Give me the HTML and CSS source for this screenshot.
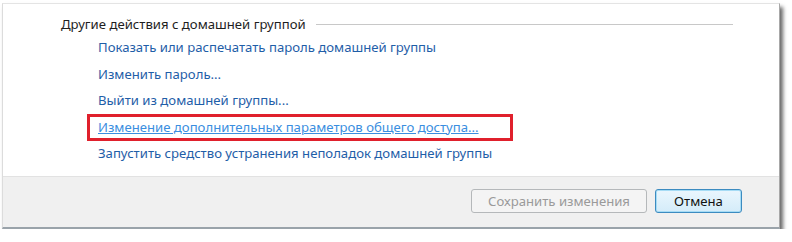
FILE: index.html
```html
<!DOCTYPE html>
<html lang="ru">
<head>
<meta charset="utf-8">
<link rel="stylesheet" href="styles.css">
</head>
<body>
<div class="window">
  <div class="content">
    <div class="heading">
      <span class="heading-text">Другие действия с домашней группой</span>
      <span class="heading-line"></span>
    </div>
    <ul class="links">
      <li><a class="link">Показать или распечатать пароль домашней группы</a></li>
      <li><a class="link">Изменить пароль...</a></li>
      <li><a class="link">Выйти из домашней группы...</a></li>
      <li class="highlight"><a class="link link-hover">Изменение дополнительных параметров общего доступа...</a></li>
      <li><a class="link">Запустить средство устранения неполадок домашней группы</a></li>
    </ul>
  </div>
  <div class="footer">
    <button class="btn btn-disabled">Сохранить изменения</button>
    <button class="btn btn-default">Отмена</button>
  </div>
</div>
</body>
</html>
```
FILE: styles.css
```css
html, body {
  margin: 0;
  padding: 0;
  background: #ffffff;
}
body {
  font-family: "Noto Sans", "Open Sans", sans-serif;
  font-size: 13.15px;
}
.window {
  margin: 3px 0 0 2px;
  width: 776px;
  height: 223px;
  border-left: 1px solid #dcdcdc;
  border-top: 1px solid #e4e4e4;
  border-right: 1px solid #a8a8a8;
  border-bottom: 2px solid #9aa3aa;
  box-shadow: 3px 4px 4px rgba(0, 0, 0, 0.6);
  display: flex;
  flex-direction: column;
  background: #ffffff;
}
.content {
  height: 172px;
  padding-left: 58px;
  padding-right: 46px;
  box-sizing: border-box;
  padding-top: 10px;
}
.heading {
  display: flex;
  align-items: center;
  height: 20px;
}
.heading-text {
  color: #1e1e1e;
  white-space: nowrap;
}
.heading-line {
  flex: 1;
  height: 1px;
  background: #c8c8c8;
  margin-left: 10px;
}
.links {
  list-style: none;
  margin: 0;
  padding: 0 0 0 37px;
}
.links li {
  height: 26.5px;
  display: flex;
  align-items: center;
}
.link {
  color: #1f5ea8;
  white-space: nowrap;
  cursor: pointer;
}
.link-hover {
  color: #3a8ee0;
  text-decoration: underline;
}
.highlight {
  position: relative;
}
.highlight::after {
  content: "";
  position: absolute;
  left: -11px;
  top: 0;
  width: 426px;
  height: 27px;
  box-sizing: border-box;
  border: 3px solid #e0202c;
}
.footer {
  flex: 1;
  background: #f0f0f0;
  border-top: 1px solid #e2e2e2;
  display: flex;
  justify-content: flex-end;
  align-items: center;
  gap: 8px;
  padding-right: 37px;
  padding-bottom: 2px;
}
.btn {
  font-family: inherit;
  font-size: 13.15px;
  height: 24px;
  border-radius: 3px;
  padding: 0;
}
.btn-disabled {
  width: 176px;
  border: 1px solid #b5b8ba;
  background: #f4f4f4;
  color: #9a9a9a;
}
.btn-default {
  width: 87px;
  border: 1px solid #3c8bc0;
  box-shadow: inset 0 0 0 1px #a6dcf5;
  background: linear-gradient(#eaf6fd, #d4ecf9);
  color: #111111;
}
```
